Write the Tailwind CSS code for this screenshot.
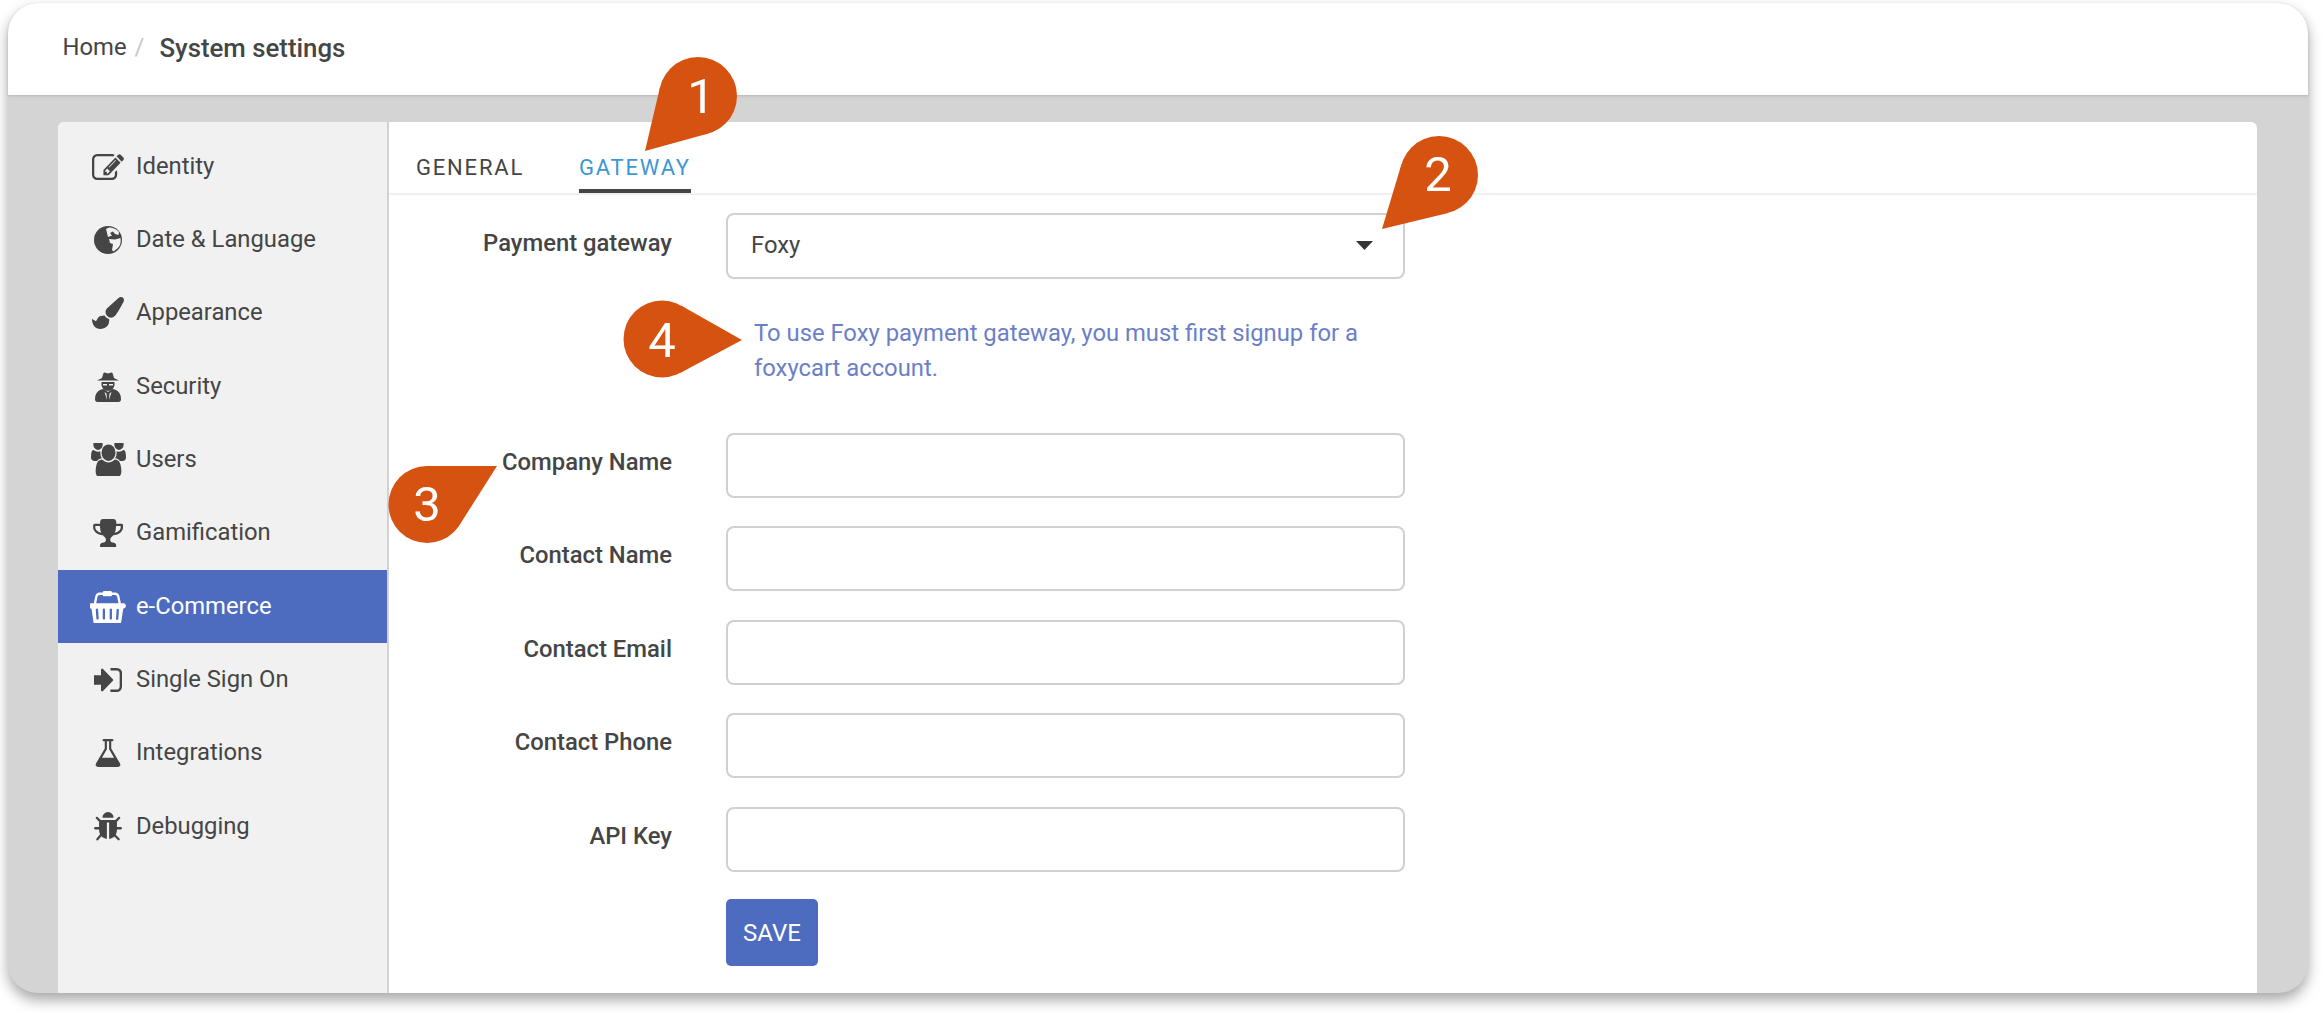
<!DOCTYPE html>
<html>
<head>
<meta charset="utf-8">
<script src="https://cdn.jsdelivr.net/npm/@tailwindcss/browser@4"></script>
</head>
<body class="bg-white overflow-hidden font-['Roboto',sans-serif] text-[#454545]">
<div class="relative w-[2324px] h-[1013px] pl-[8px] pt-[3px]">
  <div class="w-[2300px] h-[990px] rounded-[30px] bg-[#d4d4d4] shadow-[0_7px_14px_rgba(0,0,0,0.35)]">
    <div class="h-[92px] pl-[54.5px] pb-[2px] rounded-t-[30px] bg-white flex items-center shadow-[0_1px_3px_rgba(0,0,0,0.15)] text-[23.8px]">
      <span>Home</span>
      <span class="ml-[8px] mr-[15px] text-[#c8c8c8]">/</span>
      <span class="text-[25.8px] font-medium">System settings</span>
    </div>
    <div class="pl-[50px] pr-[51px] pt-[27px]">
      <div class="flex h-[871px] bg-white rounded-t-[6px] overflow-hidden">
        <nav class="w-[331px] shrink-0 bg-[#f1f1f1] border-r-2 border-[#d2d2d2] pt-[8px] text-[23.8px]">
          <a class="h-[73.33px] flex items-center">
            <span class="w-[78px] pl-[22px] flex justify-center"><svg class="w-[32px] h-[26px] overflow-visible" viewBox="0 128 1792 1408" preserveAspectRatio="none" fill="#454545"><path d="M888 1184l116-116-152-152-116 116v56h96v96h56zm440-720q-16-16-33 1l-350 350q-17 17-1 33t33-1l350-350q17-17 1-33zm80 594v190q0 119-84.5 203.5t-203.5 84.5h-832q-119 0-203.5-84.5t-84.5-203.5v-832q0-119 84.5-203.5t203.5-84.5h832q63 0 117 25 15 7 18 23 3 17-9 29l-49 49q-14 14-32 8-23-6-45-6h-832q-66 0-113 47t-47 113v832q0 66 47 113t113 47h832q66 0 113-47t47-113v-126q0-13 9-22l64-64q15-15 35-7t20 29zm-96-738l288 288-672 672h-288v-288zm444 132l-92 92-288-288 92-92q28-28 68-28t68 28l152 152q28 28 28 68t-28 68z"/></svg></span>
            <span>Identity</span>
          </a>
          <a class="h-[73.33px] flex items-center">
            <span class="w-[78px] pl-[22px] flex justify-center"><svg class="w-[28px] h-[28px]" viewBox="0 0 28 28"><circle cx="14" cy="14" r="14" fill="#454545"/><path d="M12 3 L15 1.5 Q21 1.5 25 6 L24.5 9 L21 8 L19 5.5 L16 7 L18 9.5 L14 11 Z M15 13 L21 13.5 L26.5 12 Q27.5 18 24 22 L19.5 25.5 L18 24 L19 18 L16 17 Z" fill="#f1f1f1"/></svg></span>
            <span>Date &amp; Language</span>
          </a>
          <a class="h-[73.33px] flex items-center">
            <span class="w-[78px] pl-[22px] flex justify-center"><svg class="w-[32px] h-[32px]" viewBox="0 0 1792 1792" fill="#454545"><path d="M1615 0q70 0 122.5 46.5t52.5 116.5q0 63-45 151-332 629-465 752-97 91-218 91-126 0-216.5-92.5t-90.5-219.5q0-128 92-212l638-579q59-54 130-54zm-909 1034q39 76 106.5 130t150.5 76l1 71q4 213-129.5 347t-348.5 134q-123 0-218-46.5t-152.5-127.5-86.5-183-29-220q7 5 41 30t62 44.5 59 36.5 46 17q41 0 55-37 25-66 57.5-112.5t69.5-76 88-47.5 103-25.5 125-10.5z"/></svg></span>
            <span>Appearance</span>
          </a>
          <a class="h-[73.33px] flex items-center">
            <span class="w-[78px] pl-[22px] flex justify-center"><svg class="w-[26px] h-[30px]" viewBox="0 0 26 30" fill="#454545"><path d="M7 6 L8.5 1 Q9 0 10.5 .8 L13 1.6 L15.5 .8 Q17 0 17.5 1 L19 6 L24 8.5 L2 8.5 Z"/><path d="M6.5 10 H19.5 V13 Q19 18 13 19 Q7 18 6.5 13 Z"/><path d="M2.5 30 Q0 30 0 27 Q0 20 6 17.5 L9 17 L13 20 L17 17 L20 17.5 Q26 20 26 27 Q26 30 23.5 30 Z"/><path d="M8 12 H12 V13.5 H8 Z M14 12 H18 V13.5 H14 Z M9.5 20 L12 28 L11.5 21.5 Z M16.5 20 L14 28 L14.5 21.5 Z" fill="#f1f1f1"/></svg></span>
            <span>Security</span>
          </a>
          <a class="h-[73.33px] flex items-center">
            <span class="w-[78px] pl-[22px] flex justify-center"><svg class="w-[35px] h-[33px]" viewBox="0 192 1920 1536" preserveAspectRatio="none" fill="#454545"><path d="M593 896q-162 5-265 128h-134q-82 0-138-40.5t-56-118.5q0-353 124-353 6 0 43.5 21t97.5 42.5 119 21.5q67 0 133-23-5 37-5 66 0 139 81 256zm1071 637q0 120-73 189.5t-194 69.5h-874q-121 0-194-69.5t-73-189.5q0-53 3.5-103.5t14-109 26.5-108.5 43-97.5 62-81 85.5-53.5 111.5-20q10 0 43 21.5t73 48 107 48 135 21.5 135-21.5 107-48 73-48 43-21.5q61 0 111.5 20t85.5 53.5 62 81 43 97.5 26.5 108.5 14 109 3.5 103.5zm-1024-1277q0 106-75 181t-181 75-181-75-75-181 75-181 181-75 181 75 75 181zm704 384q0 159-112.5 271.5t-271.5 112.5-271.5-112.5-112.5-271.5 112.5-271.5 271.5-112.5 271.5 112.5 112.5 271.5zm576 225q0 78-56 118.5t-138 40.5h-134q-103-123-265-128 81-117 81-256 0-29-5-66 66 23 133 23 59 0 119-21.5t97.5-42.5 43.5-21q124 0 124 353zm-128-609q0 106-75 181t-181 75-181-75-75-181 75-181 181-75 181 75 75 181z"/></svg></span>
            <span>Users</span>
          </a>
          <a class="h-[73.33px] flex items-center">
            <span class="w-[78px] pl-[22px] flex justify-center"><svg class="w-[30px] h-[28px]" viewBox="64 128 1664 1536" preserveAspectRatio="none" fill="#454545"><path d="M522 883q-74-162-74-371h-256v96q0 78 94.5 162t235.5 113zm1078-275v-96h-256q0 209-74 371 141-29 235.5-113t94.5-162zm128-128v128q0 71-41.5 143t-112 130-173 97.5-215.5 44.5q-42 54-95 95-38 34-52.5 72.5t-14.5 90.5q0 55 31 93t99 38q76 0 135.5 46t59.5 116v64q0 14-9 23t-23 9h-832q-14 0-23-9t-9-23v-64q0-70 59.5-116t135.5-46q68 0 99-38t31-93q0-52-14.5-90.5t-52.5-72.5q-53-41-95-95-113-5-215.5-44.5t-173-97.5-112-130-41.5-143v-128q0-40 28-68t68-28h288v-96q0-66 47-113t113-47h576q66 0 113 47t47 113v96h288q40 0 68 28t28 68z"/></svg></span>
            <span>Gamification</span>
          </a>
          <a class="h-[73.33px] flex items-center bg-[#4d6cc0] text-white">
            <span class="w-[78px] pl-[22px] flex justify-center"><svg class="w-[37px] h-[33px]" viewBox="0 192 2048 1600" preserveAspectRatio="none" fill="#ffffff"><path d="M1792 832q53 0 90.5 37.5t37.5 90.5-37.5 90.5-90.5 37.5h-15l-115 662q-8 46-44 76t-82 30h-1280q-46 0-82-30t-44-76l-115-662h-15q-53 0-90.5-37.5t-37.5-90.5 37.5-90.5 90.5-37.5h1792zm-1435 800q26-2 43.5-22.5t15.5-46.5l-32-416q-2-26-22.5-43.5t-46.5-15.5-43.5 22.5-15.5 46.5l32 416q2 25 20.5 42t43.5 17h5zm411-64v-416q0-26-19-45t-45-19-45 19-19 45v416q0 26 19 45t45 19 45-19 19-45zm384 0v-416q0-26-19-45t-45-19-45 19-19 45v416q0 26 19 45t45 19 45-19 19-45zm352 18l32-416q2-26-15.5-46.5t-43.5-22.5-46.5 15.5-22.5 43.5l-32 416q-2 26 15.5 46.5t43.5 22.5h5q25 0 43.5-17t20.5-42zm-1156-1050l-93 412h-132l101-441q19-88 89-143.5t160-55.5h167q0-26 19-45t45-19h384q26 0 45 19t19 45h167q90 0 160 55.5t89 143.5l101 441h-132l-93-412q-11-44-45.5-72t-79.5-28h-167q0 26-19 45t-45 19h-384q-26 0-45-19t-19-45h-167q-45 0-79.5 28t-45.5 72z" transform="translate(64 0)"/></svg></span>
            <span>e-Commerce</span>
          </a>
          <a class="h-[73.33px] flex items-center">
            <span class="w-[78px] pl-[22px] flex justify-center"><svg class="w-[28px] h-[24px]" viewBox="128 256 1536 1280" preserveAspectRatio="none" fill="#454545"><path d="M1184 896q0 26-19 45l-544 544q-19 19-45 19t-45-19-19-45v-288h-448q-26 0-45-19t-19-45v-384q0-26 19-45t45-19h448v-288q0-26 19-45t45-19 45 19l544 544q19 19 19 45zm480-352v704q0 119-84.5 203.5t-203.5 84.5h-320q-13 0-22.5-9.5t-9.5-22.5q0-4-1-20t-.5-26.5 3-23.5 10-19.5 20.5-6.5h320q66 0 113-47t47-113v-704q0-66-47-113t-113-47h-312q-13 0-22.5-9.5t-9.5-22.5q0-4-1-20t-.5-26.5 3-23.5 10-19.5 20.5-6.5h320q119 0 203.5 84.5t84.5 203.5z"/></svg></span>
            <span>Single Sign On</span>
          </a>
          <a class="h-[73.33px] flex items-center">
            <span class="w-[78px] pl-[22px] flex justify-center"><svg class="w-[26px] h-[28px]" viewBox="128 128 1536 1536" preserveAspectRatio="none" fill="#454545"><path d="M1591 1448q56 89 21.5 152.5t-140.5 63.5h-1152q-106 0-140.5-63.5t21.5-152.5l503-793v-399h-64q-26 0-45-19t-19-45 19-45 45-19h512q26 0 45 19t19 45-19 45-45 19h-64v399zm-779-725l-272 429h712l-272-429-20-31v-436h-128v436z"/></svg></span>
            <span>Integrations</span>
          </a>
          <a class="h-[73.33px] flex items-center">
            <span class="w-[78px] pl-[22px] flex justify-center"><svg class="w-[28px] h-[29px]" viewBox="96 64 1600 1600" preserveAspectRatio="none" fill="#454545"><path d="M1696 960q0 26-19 45t-45 19h-224q0 171-67 290l208 209q19 19 19 45t-19 45q-18 19-45 19t-45-19l-198-197q-5 5-15 13t-42 28.5-65 36.5-82 29-97 13v-896h-128v896q-51 0-101.5-13.5t-87-33-66-39-43.5-32.5l-15-14-183 207q-20 21-48 21-24 0-43-16-19-18-20.5-44.5t15.5-46.5l202-227q-58-114-58-274h-224q-26 0-45-19t-19-45 19-45 45-19h224v-294l-173-173q-19-19-19-45t19-45 45-19 45 19l173 173h844l173-173q19-19 45-19t45 19 19 45-19 45l-173 173v294h224q26 0 45 19t19 45zm-480-576h-640q0-133 93.5-226.5t226.5-93.5 226.5 93.5 93.5 226.5z"/></svg></span>
            <span>Debugging</span>
          </a>
        </nav>
        <section class="flex-1 text-[23.8px]">
          <div class="h-[73px] border-b-2 border-[#f0f0f0] pl-[27px] flex items-end gap-[55px] text-[22px] tracking-[1.8px]">
            <span class="h-[43px] pt-[3px] leading-[30px]">GENERAL</span>
            <span class="h-[43px] pt-[3px] leading-[30px] text-[#3d97d3] border-b-[4px] border-[#454545] w-[112px] whitespace-nowrap">GATEWAY</span>
          </div>
          <div class="pt-[18px]">
            <div class="flex gap-[54px]">
              <label class="w-[283px] text-right font-medium pt-[15px] leading-[30px]">Payment gateway</label>
              <div class="w-[679px] h-[66px] border-2 border-[#d0d0d0] rounded-[8px] pl-[23px] pr-[30px] pb-[2px] flex items-center justify-between">
                <span class="leading-[30px]">Foxy</span>
                <svg class="w-[17px] h-[9px]" viewBox="0 0 17 9" fill="#333"><path d="M0 0H17L8.5 9Z"/></svg>
              </div>
            </div>
            <p class="ml-[365px] mt-[37px] w-[640px] leading-[35px] text-[#6b7fc8]">To use Foxy payment gateway, you must first signup for a foxycart account.</p>
            <form class="mt-[46.5px] flex flex-col gap-[28.5px]">
              <div class="flex gap-[54px]"><label class="w-[283px] text-right font-medium pt-[14px] leading-[30px]">Company Name</label><input class="w-[679px] h-[65px] border-2 border-[#d0d0d0] rounded-[8px]"></div>
              <div class="flex gap-[54px]"><label class="w-[283px] text-right font-medium pt-[14px] leading-[30px]">Contact Name</label><input class="w-[679px] h-[65px] border-2 border-[#d0d0d0] rounded-[8px]"></div>
              <div class="flex gap-[54px]"><label class="w-[283px] text-right font-medium pt-[14px] leading-[30px]">Contact Email</label><input class="w-[679px] h-[65px] border-2 border-[#d0d0d0] rounded-[8px]"></div>
              <div class="flex gap-[54px]"><label class="w-[283px] text-right font-medium pt-[14px] leading-[30px]">Contact Phone</label><input class="w-[679px] h-[65px] border-2 border-[#d0d0d0] rounded-[8px]"></div>
              <div class="flex gap-[54px]"><label class="w-[283px] text-right font-medium pt-[14px] leading-[30px]">API Key</label><input class="w-[679px] h-[65px] border-2 border-[#d0d0d0] rounded-[8px]"></div>
              <div class="pl-[337px] -mt-[1px]"><button type="button" class="w-[92px] h-[67px] bg-[#4d6cc0] text-white rounded-[5px] text-[24px]">SAVE</button></div>
            </form>
          </div>
        </section>
      </div>
    </div>
  </div>
  <svg class="absolute left-0 top-0 pointer-events-none" width="2324" height="1013" viewBox="0 0 2324 1013">
    <g fill="#d55210">
      <circle cx="698" cy="96" r="39"/><path d="M708.4 133.6 L645 151 L660 87.1 Z"/>
      <circle cx="1439" cy="175" r="39"/><path d="M1448.2 212.9 L1382 229 L1401.6 163.8 Z"/>
      <circle cx="427" cy="504.5" r="38.5"/><path d="M459.5 525.1 L497 466 L427 466 Z"/>
      <circle cx="662" cy="339" r="38.5"/><path d="M680.1 373 L742 340 L681 305.5 Z"/>
    </g>
    <g fill="#ffffff" font-family="Roboto, sans-serif" font-size="49" text-anchor="middle">
      <text x="701" y="113">1</text>
      <text x="1438" y="191">2</text>
      <text x="427" y="521">3</text>
      <text x="662" y="357">4</text>
    </g>
  </svg>
</div>
</body>
</html>
